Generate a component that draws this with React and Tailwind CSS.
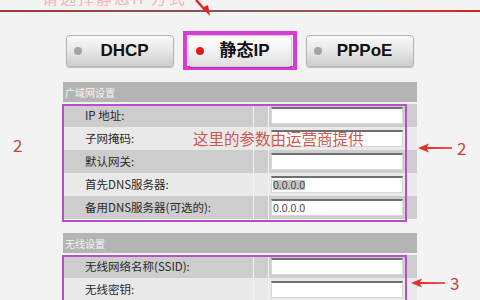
import React from "react";

const cjk = { fontFamily: '"Noto Sans CJK SC", "Noto Sans", sans-serif' };

function ModeButton({ label, active }) {
  const face = (
    <div
      className={
        "flex items-center h-[32px] w-[108px] rounded-[4px] border border-[#b5b5b5] bg-gradient-to-b from-[#fafafa] via-[#e6e6e6] to-[#cdcdcd] shadow-[0_1px_1px_rgba(0,0,0,0.25)] " +
        (active ? "w-[106px] border-[#d0d0d0] from-[#ffffff] via-[#f2f2f2] to-[#dedede]" : "")
      }
    >
      <span
        className={
          "ml-[7px] w-[8px] h-[8px] rounded-full " +
          (active ? "bg-[#e21b1b]" : "bg-[#a3a3a3]")
        }
      />
      <span
        className="flex-1 text-center pr-[6px] text-[17px] font-bold text-[#111] leading-none"
        style={{ fontFamily: '"Liberation Sans", "Noto Sans CJK SC", sans-serif' }}
      >
        {label}
      </span>
    </div>
  );
  if (!active) return face;
  return (
    <div className="border-[4px] border-[#d93ad9] p-[1px] h-[39px] w-[114px] flex items-center justify-center">
      {face}
    </div>
  );
}

function Row({ label, shade, value, selected }) {
  return (
    <div className={"flex h-[23px] " + (shade ? "bg-[#cdcdcd]" : "bg-[#e9e9e9]")}>
      <div className="w-[190px] flex items-center pl-[22px] text-[11.5px] text-[#2a2a2a]" style={cjk}>
        {label}
      </div>
      <div className="w-px bg-[#f2f2f2]" />
      <div className="w-[14px]" />
      <div className="w-px bg-[#f2f2f2]" />
      <div className="flex-1 flex items-center pl-[2px]">
        <div className="w-[132px] h-[17px] bg-white border border-[#d8d8d8] border-t-2 border-t-[#6f6f6f] flex items-center pl-[1px]">
          {value && (
            <span
              className={"text-[10.5px] text-[#444] leading-none " + (selected ? "bg-[#c4c4c4]" : "")}
              style={{ fontFamily: '"Liberation Sans", sans-serif' }}
            >
              {value}
            </span>
          )}
        </div>
      </div>
    </div>
  );
}

function Header({ title }) {
  return (
    <div className="h-[20px] bg-[#b4b4b4] flex items-center pl-[2px] text-[10px] text-[#f4f4f4]" style={cjk}>
      {title}
    </div>
  );
}

function LeftArrow({ label }) {
  return (
    <div className="flex items-center gap-[5px]">
      <svg width="34" height="10" viewBox="0 0 34 10">
        <path d="M0 5 L11 0.5 L9 4 L34 4.3 L34 5.7 L9 6 L11 9.5 Z" fill="#e0302a" />
      </svg>
      <span className="text-[17px] text-[#c8453c] leading-none" style={cjk}>
        {label}
      </span>
    </div>
  );
}

export default function App() {
  return (
    <div className="relative w-[480px] h-[300px] overflow-hidden bg-[#f3f3f3]">
      {/* top strip */}
      <div className="relative h-[22px]">
        <div
          className="absolute -top-[15px] left-[42px] text-[16px] text-[#f3b4b4] tracking-[2px]"
          style={cjk}
        >
          请选择静态IP方式
        </div>
        <div className="absolute top-[10px] left-0 w-full h-[2px] bg-gradient-to-r from-[#a83232] via-[#7d5a5a] to-[#d81e1e]" />
        <svg className="absolute top-0 left-[194px]" width="20" height="18" viewBox="0 0 20 18">
          <path d="M2 0 L11 10" stroke="#e02424" strokeWidth="2.5" />
          <path d="M8 8 L16 16 L14 5 Z" fill="#e02424" />
        </svg>
      </div>

      {/* mode buttons */}
      <div className="flex items-center h-[39px] mt-[9px] pl-[66px] gap-[9px]">
        <ModeButton label="DHCP" />
        <ModeButton label="静态IP" active />
        <ModeButton label="PPPoE" />
      </div>

      {/* WAN section */}
      <div className="relative ml-[63px] w-[354px] mt-[12px]">
        <Header title="广域网设置" />
        <div className="relative mt-[2px] pb-[3px]">
          <Row label="IP 地址:" shade />
          <Row label="子网掩码:" />
          <Row label="默认网关:" shade />
          <Row label="首先DNS服务器:" value="0.0.0.0" selected />
          <Row label="备用DNS服务器(可选的):" value="0.0.0.0" shade />
          <div className="absolute top-0 -left-[1px] w-[345px] h-[118px] border-2 border-[#b84fc6] pointer-events-none" />
          <div
            className="absolute top-[23px] left-[130px] text-[15.5px] text-[#cd5850] leading-[23px] whitespace-nowrap"
            style={cjk}
          >
            这里的参数由运营商提供
          </div>
        </div>
      </div>

      {/* wireless section */}
      <div className="relative ml-[63px] w-[354px] mt-[11px]">
        <Header title="无线设置" />
        <div className="relative mt-[2px]">
          <Row label="无线网络名称(SSID):" shade />
          <Row label="无线密钥:" />
          <div className="absolute top-0 -left-[1px] w-[345px] h-[60px] border-2 border-[#b84fc6] pointer-events-none" />
        </div>
      </div>

      {/* annotations */}
      <div className="absolute top-[132px] left-[13px] text-[17px] text-[#c8453c]" style={cjk}>
        2
      </div>
      <div className="absolute top-[139px] left-[418px]">
        <LeftArrow label="2" />
      </div>
      <div className="absolute top-[274px] left-[411px]">
        <LeftArrow label="3" />
      </div>
    </div>
  );
}
